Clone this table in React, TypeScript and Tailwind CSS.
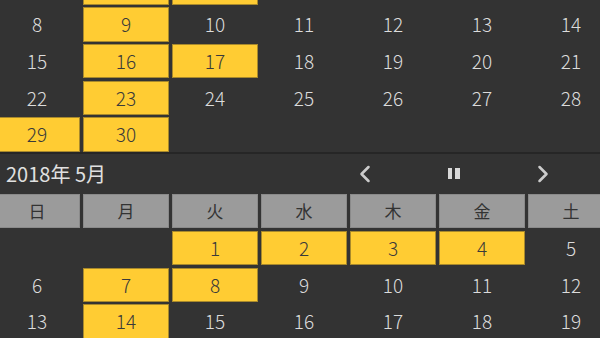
import { ChevronLeft, ChevronRight } from 'lucide-react';

type Day = { n: number | null; on?: boolean };

const april: Day[][] = [
  [{ n: 1 }, { n: 2, on: true }, { n: 3, on: true }, { n: 4 }, { n: 5 }, { n: 6 }, { n: 7 }],
  [{ n: 8 }, { n: 9, on: true }, { n: 10 }, { n: 11 }, { n: 12 }, { n: 13 }, { n: 14 }],
  [{ n: 15 }, { n: 16, on: true }, { n: 17, on: true }, { n: 18 }, { n: 19 }, { n: 20 }, { n: 21 }],
  [{ n: 22 }, { n: 23, on: true }, { n: 24 }, { n: 25 }, { n: 26 }, { n: 27 }, { n: 28 }],
  [{ n: 29, on: true }, { n: 30, on: true }, { n: null }, { n: null }, { n: null }, { n: null }, { n: null }],
];

const may: Day[][] = [
  [{ n: null }, { n: null }, { n: 1, on: true }, { n: 2, on: true }, { n: 3, on: true }, { n: 4, on: true }, { n: 5 }],
  [{ n: 6 }, { n: 7, on: true }, { n: 8, on: true }, { n: 9 }, { n: 10 }, { n: 11 }, { n: 12 }],
  [{ n: 13 }, { n: 14, on: true }, { n: 15 }, { n: 16 }, { n: 17 }, { n: 18 }, { n: 19 }],
];

const weekdays = ['日', '月', '火', '水', '木', '金', '土'];

function DayGrid({ rows }: { rows: Day[][] }) {
  return (
    <div className="grid grid-cols-7 gap-x-[3px] gap-y-[2.33px]">
      {rows.flat().map((d, i) => (
        <div
          key={i}
          className={`h-[34.33px] flex items-center justify-center text-[19px] font-light ${
            d.on
              ? 'bg-[#ffcc33] border border-[#a8892c] text-[#3a3a3a]'
              : 'text-[#dcdcdc]'
          }`}
        >
          {d.n ?? ''}
        </div>
      ))}
    </div>
  );
}

export default function App() {
  return (
    <div
      className="w-[600px] h-[338px] overflow-hidden bg-[#333333]"
      style={{ fontFamily: '"Noto Sans CJK JP", "Noto Sans", sans-serif' }}
    >
      {/* 4月（スクロールで上が切れている） */}
      <div className="w-[620px] ml-[-6px] mt-[-29.33px]">
        <DayGrid rows={april} />
      </div>

      <div className="mt-[0.33px] h-[2px] bg-[#262626]" />

      {/* 月タイトルとナビ */}
      <div className="h-[40px] flex items-center justify-between">
        <span className="pl-[6px] text-[20px] text-[#e0e0e0]">2018年&nbsp;5月</span>
        <div className="flex items-center mr-[13px]">
          <button className="w-[89px] flex justify-center text-[#cccccc]">
            <ChevronLeft size={28} strokeWidth={2.2} />
          </button>
          <button className="w-[89px] flex justify-center">
            <span className="flex gap-[3px]">
              <span className="w-[4.5px] h-[11px] bg-[#d8d8d8]" />
              <span className="w-[4.5px] h-[11px] bg-[#d8d8d8]" />
            </span>
          </button>
          <button className="w-[89px] flex justify-center text-[#cccccc]">
            <ChevronRight size={28} strokeWidth={2.2} />
          </button>
        </div>
      </div>

      {/* 5月 */}
      <div className="w-[620px] ml-[-6px]">
        <div className="grid grid-cols-7 gap-x-[3px] mb-[3px]">
          {weekdays.map((w) => (
            <div
              key={w}
              className="h-[34px] flex items-center justify-center bg-[#9b9b9b] border border-[#8a8a8a] text-[17px] text-[#333333]"
            >
              {w}
            </div>
          ))}
        </div>
        <DayGrid rows={may} />
      </div>
    </div>
  );
}
